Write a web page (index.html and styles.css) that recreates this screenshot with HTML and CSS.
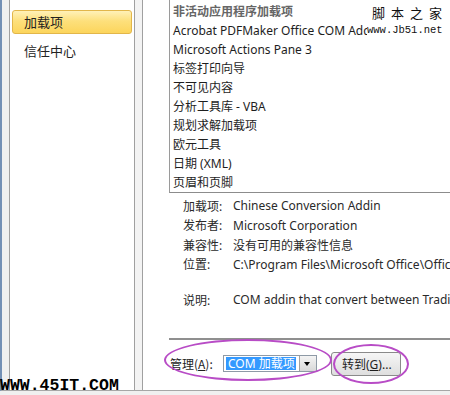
FILE: index.html
```html
<!DOCTYPE html>
<html lang="zh-CN">
<head>
    <meta charset="UTF-8">
    <meta name="viewport" content="width=device-width, initial-scale=1.0">
    <title>加载项</title>
    <link rel="stylesheet" href="styles.css">
</head>
<body>
    <div class="window">
        <div class="nav">
            <div class="nav-item selected">加载项</div>
            <div class="nav-item">信任中心</div>
        </div>
        <div class="gutter"></div>
        <div class="content">
            <div class="addin-list">
                <div class="row header">非活动应用程序加载项</div>
                <div class="row">Acrobat PDFMaker Office COM Addin</div>
                <div class="row">Microsoft Actions Pane 3</div>
                <div class="row">标签打印向导</div>
                <div class="row">不可见内容</div>
                <div class="row">分析工具库 - VBA</div>
                <div class="row">规划求解加载项</div>
                <div class="row">欧元工具</div>
                <div class="row">日期 (XML)</div>
                <div class="row">页眉和页脚</div>
            </div>

            <div class="details">
                <span class="label">加载项:</span><span class="value">Chinese Conversion Addin</span>
                <span class="label">发布者:</span><span class="value">Microsoft Corporation</span>
                <span class="label">兼容性:</span><span class="value">没有可用的兼容性信息</span>
                <span class="label">位置:</span><span class="value">C:\Program Files\Microsoft Office\Office14\ADDINS\TCSCCONV.DLL</span>
                <span class="label desc">说明:</span><span class="value desc">COM addin that convert between Traditional Chinese and Simplified Chinese</span>
            </div>

            <div class="manage">
                <span class="manage-label">管理(<u>A</u>):</span>
                <div class="dropdown">
                    <span class="dropdown-value">COM 加载项</span>
                    <span class="dropdown-arrow"></span>
                </div>
                <button class="go-button">转到(<u>G</u>)...</button>
            </div>

            <div class="mark mark-manage"></div>
            <div class="mark mark-go"></div>

            <div class="site-mark">
                <div class="site-name">脚本之家</div>
                <div class="site-url">www.Jb51.net</div>
            </div>
        </div>
    </div>
    <div class="footer-mark">WWW.45IT.COM</div>
</body>
</html>
```

FILE: styles.css
```css
body {
    margin: 0;
    width: 450px;
    height: 395px;
    overflow: hidden;
    position: relative;
    background: #f0f0f0;
    font-family: "Noto Sans", "Noto Sans CJK SC", sans-serif;
    font-size: 12px;
    color: #1e1e1e;
}

.window {
    display: flex;
    height: 391px;
    box-sizing: border-box;
    border-left: 2px solid #7390b5;
    border-bottom: 1px solid #a7a7a7;
}

/* left navigation */
.nav {
    width: 126px;
    margin-left: 7px;
    padding: 10px 2px 0;
    box-sizing: border-box;
    border-left: 1px solid #a0a0a0;
    border-right: 1px solid #a0a0a0;
    background: #fff;
    display: flex;
    flex-direction: column;
    gap: 4px;
}

.nav-item {
    height: 24px;
    line-height: 24px;
    padding-left: 11px;
    border: 1px solid transparent;
    border-radius: 3px;
    font-family: "Noto Sans CJK SC", sans-serif;
    font-size: 13px;
    color: #222;
}

.nav-item.selected {
    height: 22px;
    line-height: 22px;
    background: linear-gradient(#fff1b8, #fde07c 45%, #fcd55c);
    border-color: #e2b64a;
}

.gutter {
    width: 7px;
    background: #f3f3f3;
}

/* right content */
.content {
    flex: 1;
    position: relative;
    overflow: hidden;
    background: #fff;
    border-left: 1px solid #a0a0a0;
    padding-left: 26px;
}

.addin-list {
    width: 340px;
    padding-top: 2px;
    border-left: 1px solid #9a9a9a;
    border-bottom: 1px solid #8c8c8c;
}

.row {
    height: 19px;
    line-height: 19px;
    padding-left: 3px;
    white-space: nowrap;
}

.row.header {
    font-weight: bold;
    color: #666;
}

.details {
    display: grid;
    grid-template-columns: 50px auto;
    grid-template-rows: repeat(4, 19.5px) 16px 19.5px;
    align-items: center;
    margin: 3px 0 0 14px;
    color: #2a2a2a;
    white-space: nowrap;
}

.details .desc {
    grid-row: 6;
}

.manage {
    display: flex;
    align-items: center;
    margin-top: 28px;
    padding: 11px 0 0 1px;
    border-top: 2px solid #8f8f8f;
}

.manage-label {
    width: 53px;
    font-family: "Noto Sans CJK SC", sans-serif;
}

.dropdown {
    display: flex;
    width: 94px;
    height: 17px;
    box-sizing: border-box;
    border: 1px solid #8e9aa6;
    padding-left: 2px;
    align-items: stretch;
}

.dropdown-value {
    flex: 1;
    margin: 1px 3px 1px 0;
    padding-left: 2px;
    background: #3399ff;
    color: #fff;
    line-height: 13px;
    white-space: nowrap;
}

.dropdown-arrow {
    width: 16px;
    position: relative;
    border-left: 1px solid #a0a0a0;
    background: linear-gradient(#f4f4f4, #d8d8d8);
}

.dropdown-arrow::after {
    content: "";
    position: absolute;
    left: 4px;
    top: 6px;
    border-left: 3.5px solid transparent;
    border-right: 3.5px solid transparent;
    border-top: 4px solid #000;
}

.go-button {
    width: 70px;
    height: 24px;
    margin-left: 14px;
    margin-top: 1px;
    border: 1px solid #8a8a8a;
    border-radius: 3px;
    background: linear-gradient(#f6f6f6, #dedede);
    font-family: "Noto Sans", "Noto Sans CJK SC", sans-serif;
    font-size: 12px;
    color: #1e1e1e;
    text-align: left;
    padding: 0 0 0 10px;
}

/* annotation rings drawn over the dialog */
.mark {
    position: absolute;
    border: 2px solid #b84cc6;
    border-radius: 50%;
}

.mark-manage {
    left: 21px;
    top: 339px;
    width: 164px;
    height: 38px;
}

.mark-go {
    left: 190px;
    top: 344px;
    width: 72px;
    height: 36px;
}

.site-mark {
    position: absolute;
    left: 224px;
    top: 0;
    width: 83px;
    height: 40px;
    background: #fff;
    white-space: nowrap;
}

.site-name {
    margin: 4px 0 0 5px;
    font-family: "Noto Sans CJK SC", sans-serif;
    font-size: 13px;
    letter-spacing: 6px;
    line-height: 18px;
    color: #111;
}

.site-url {
    font-family: "Liberation Mono", monospace;
    font-size: 10.5px;
    line-height: 16px;
    color: #111;
}

.footer-mark {
    position: absolute;
    left: 0;
    top: 377px;
    font-family: "Liberation Mono", monospace;
    font-weight: bold;
    font-size: 16.5px;
    line-height: 18px;
    color: #000;
}
```
